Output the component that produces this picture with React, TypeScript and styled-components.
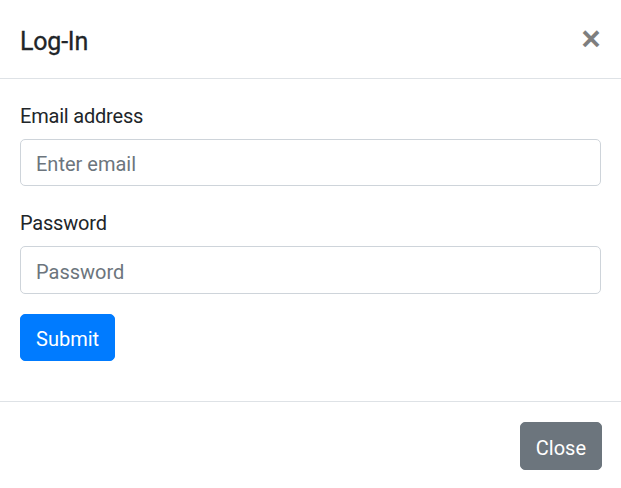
import styled, { createGlobalStyle } from "styled-components";

const GlobalStyle = createGlobalStyle`
  * { box-sizing: border-box; }
  body {
    margin: 0;
    background: #fff;
    font-family: Roboto, "Liberation Sans", sans-serif;
    color: #212529;
  }
`;

const Modal = styled.div`
  width: 621px;
  min-height: 488px;
  background: #fff;
  display: flex;
  flex-direction: column;
`;

const Header = styled.div`
  display: flex;
  align-items: flex-start;
  justify-content: space-between;
  padding: 20px;
  border-bottom: 1px solid #dee2e6;
`;

const Title = styled.h5`
  margin: 0;
  padding: 2.5px 0 0 0;
  height: 37.5px;
  font-size: 25px;
  font-weight: 400;
  line-height: 37.5px;
  letter-spacing: -0.2px;
  -webkit-text-stroke: 0.3px #212529;
`;

const CloseX = styled.button`
  margin: -20px -20px -20px auto;
  padding: 20px;
  height: 77.5px;
  background: transparent;
  border: 0;
  font-family: Roboto, "Liberation Sans", sans-serif;
  font-size: 37px;
  font-weight: 500;
  line-height: 37.5px;
  color: #000;
  opacity: 0.5;
  cursor: pointer;
`;

const Body = styled.form`
  padding: 20px;
  flex: 1;
`;

const Group = styled.div`
  margin-bottom: 20px;
`;

const Label = styled.label`
  display: block;
  margin-bottom: 10px;
  padding-top: 2px;
  height: 30px;
  font-size: 20px;
  line-height: 30px;
  letter-spacing: -0.2px;
`;

const Input = styled.input`
  display: block;
  width: 100%;
  height: 47.5px;
  padding: 9.5px 15px 5.5px;
  font-family: Roboto, "Liberation Sans", sans-serif;
  font-size: 20px;
  line-height: 30px;
  color: #495057;
  background: #fff;
  border: 1px solid #ced4da;
  border-radius: 5px;
  outline: none;
  &::placeholder {
    color: #6c757d;
  }
`;

const Button = styled.button<{ variant: "primary" | "secondary" }>`
  display: inline-block;
  height: 47.5px;
  padding: 9.5px 15px 5.5px;
  font-family: Roboto, "Liberation Sans", sans-serif;
  font-size: 20px;
  line-height: 30px;
  color: #fff;
  background: ${(p) => (p.variant === "primary" ? "#007bff" : "#6c757d")};
  border: 1px solid ${(p) => (p.variant === "primary" ? "#007bff" : "#6c757d")};
  border-radius: 5px;
  cursor: pointer;
`;

const Footer = styled.div`
  display: flex;
  justify-content: flex-end;
  align-items: center;
  padding: 15px 14px 15px 15px;
  border-top: 1px solid #dee2e6;
  & > * {
    margin: 5px;
  }
`;

function App() {
  return (
    <>
      <GlobalStyle />
      <Modal>
        <Header>
          <Title>Log-In</Title>
          <CloseX type="button" aria-label="Close">×</CloseX>
        </Header>
        <Body onSubmit={(e) => e.preventDefault()}>
          <Group>
            <Label htmlFor="email">Email address</Label>
            <Input id="email" type="email" placeholder="Enter email" />
          </Group>
          <Group>
            <Label htmlFor="password">Password</Label>
            <Input id="password" type="password" placeholder="Password" />
          </Group>
          <Group>
            <Button variant="primary" type="submit">Submit</Button>
          </Group>
        </Body>
        <Footer>
          <Button variant="secondary" type="button">Close</Button>
        </Footer>
      </Modal>
    </>
  );
}

export default App;
